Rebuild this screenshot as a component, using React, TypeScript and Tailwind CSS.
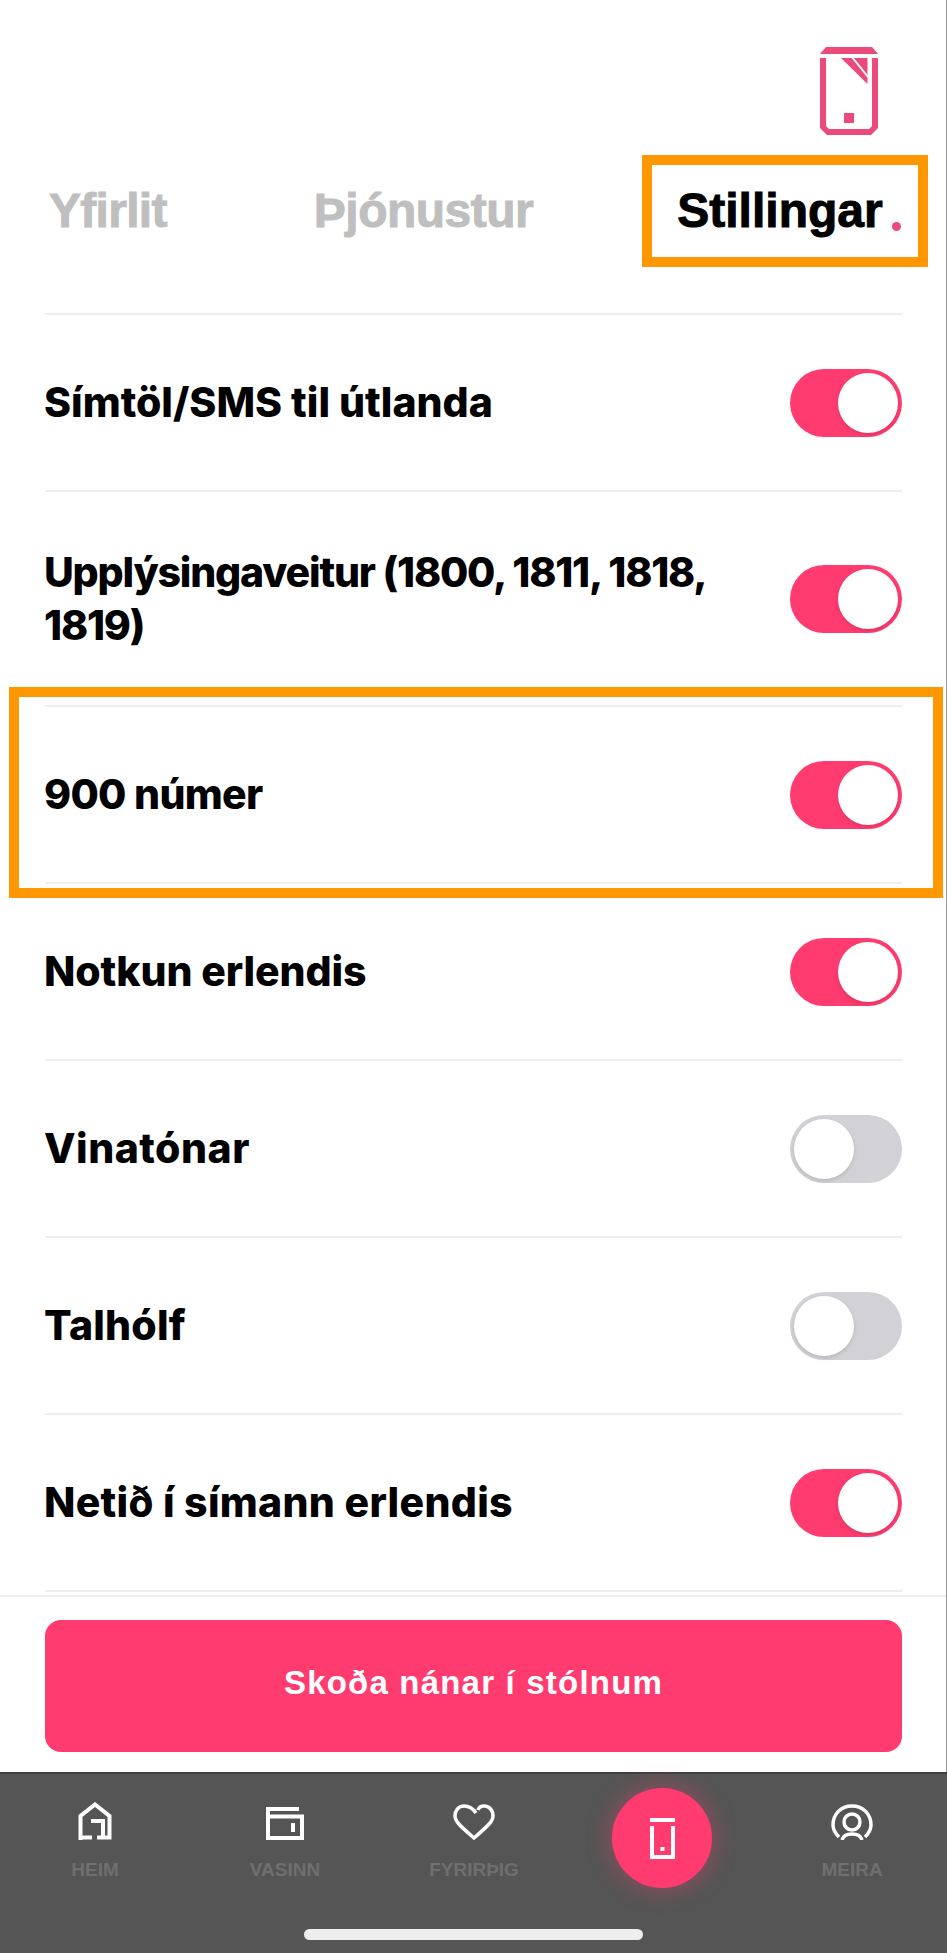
const rows: { label: string; on: boolean; tall?: boolean; track: string }[] = [
  { label: "Símtöl/SMS til útlanda", on: true, track: "tracking-[0px]" },
  { label: "Upplýsingaveitur (1800, 1811, 1818, 1819)", on: true, tall: true, track: "tracking-[-1.2px]" },
  { label: "900 númer", on: true, track: "tracking-[-0.7px]" },
  { label: "Notkun erlendis", on: true, track: "tracking-[-0.1px]" },
  { label: "Vinatónar", on: false, track: "tracking-[0.5px]" },
  { label: "Talhólf", on: false, track: "tracking-[0.2px]" },
  { label: "Netið í símann erlendis", on: true, track: "tracking-[0.3px]" },
];

function Toggle({ on }: { on: boolean }) {
  return (
    <div
      className={`flex h-[68px] w-[112px] shrink-0 items-center rounded-full px-1 ${
        on ? "justify-end bg-[#ff3b6f]" : "justify-start bg-[#d1d1d6]"
      }`}
    >
      <div className="h-[60px] w-[60px] rounded-full bg-white shadow-[0_2px_4px_rgba(0,0,0,0.12)]" />
    </div>
  );
}

function Row({ label, on, tall, track }: { label: string; on: boolean; tall?: boolean; track: string }) {
  return (
    <div
      className={`flex items-center justify-between border-b-2 border-[#eeeeee] ${
        tall ? "h-[215px]" : "h-[177px]"
      }`}
    >
      <div
        className={`-ml-px w-[700px] font-['Inter','Liberation_Sans',sans-serif] text-[41px] font-extrabold leading-[53px] text-black ${track}`}
      >
        {label}
      </div>
      <Toggle on={on} />
    </div>
  );
}

function NavItem({ label, children }: { label: string; children: React.ReactNode }) {
  return (
    <div className="flex w-[150px] flex-col items-center">
      <div className="flex h-[38px] items-end">{children}</div>
      <div className="mt-[20px] font-['Liberation_Sans',sans-serif] text-[19px] font-bold leading-[20px] text-[#6f6f6f]">
        {label}
      </div>
    </div>
  );
}

export default function App() {
  return (
    <div className="relative flex h-[1953px] w-[947px] flex-col overflow-hidden bg-white">
      <div className="flex justify-end pr-[69px] pt-[47px]">
        <svg width="58" height="88" viewBox="0 0 58 88" fill="#ec4a7b">
          <path d="M6 0H52L58 7H0Z" />
          <path d="M0 11H6V79L9 82H49L52 79V11H58V81L51 88H7L0 81Z" />
          <path d="M21 11H47.5V37Z" />
          <path d="M32 10L48 30" fill="none" stroke="#fff" strokeWidth="2" />
          <rect x="24" y="66" width="10" height="10" />
        </svg>
      </div>

      <div className="mt-[52px] flex h-[48px] items-center font-['Liberation_Sans',sans-serif] text-[48px] font-bold leading-[48px] text-[#bfbfbf] [-webkit-text-stroke:1px_currentColor]">
        <span className="ml-[49px] tracking-[-0.7px]">Yfirlit</span>
        <span className="ml-[147px] tracking-[-0.5px]">Þjónustur</span>
        <span className="ml-[144px] text-black">Stillingar</span>
        <span className="ml-[9px] mt-[30px] h-[9px] w-[9px] rounded-full bg-[#ec4a7b]" />
      </div>

      <div className="mx-[45px] mt-[78px] border-t-2 border-[#eeeeee]">
        {rows.map((r, i) => (
          <Row key={i} {...r} />
        ))}
      </div>

      <div className="mt-[3px] h-[2px] bg-[#eeeeee]" />

      <div className="mx-[45px] mt-[23px] flex h-[132px] items-center justify-center rounded-[16px] bg-[#ff3b6f] pb-[6px]">
        <span className="font-['Liberation_Sans',sans-serif] text-[33px] font-bold tracking-[1.2px] text-white">
          Skoða nánar í stólnum
        </span>
      </div>

      <div className="relative mt-[20px] flex-1 border-t-2 border-[#3f3f3f] bg-[#555555]">
        <div className="absolute left-[20px] top-[28px]">
          <NavItem label="HEIM">
            <svg width="34" height="38" viewBox="0 0 34 38" fill="none" stroke="#fff" strokeWidth="4">
              <path d="M2.5 38V14L17 2.5L31.5 14V35.5H19" />
              <path d="M25 35V19H13" />
              <path d="M2.5 35.5H14" />
            </svg>
          </NavItem>
        </div>
        <div className="absolute left-[210px] top-[28px]">
          <NavItem label="VASINN">
            <svg width="38" height="33" viewBox="0 0 38 33" fill="none" stroke="#fff" strokeWidth="4">
              <path d="M33 2H2V31H36V9.5H2" />
              <path d="M27 16V25" />
            </svg>
          </NavItem>
        </div>
        <div className="absolute left-[399px] top-[28px]">
          <NavItem label="FYRIRÞIG">
            <svg width="42" height="36" viewBox="0 0 42 36" fill="none" stroke="#fff" strokeWidth="3.5">
              <path d="M23 9C19 3 15 2 11 2C5 2 2 7 2 12C2 17 6 21 21 34C36 21 40 17 40 12C40 6 36 2 31 2C28 2 26 3 25 6" />
            </svg>
          </NavItem>
        </div>
        <div className="absolute left-[612px] top-[14px] flex h-[100px] w-[100px] items-center justify-center rounded-full bg-[#ff3b6f] shadow-[0_0_24px_rgba(255,59,111,0.45)]">
          <svg width="25" height="41" viewBox="0 0 25 41" fill="none" stroke="#fff" strokeWidth="4">
            <path d="M0 2H25" />
            <path d="M2 8V39H23V8" />
            <rect x="10.5" y="29" width="4" height="4" fill="#fff" stroke="none" />
          </svg>
        </div>
        <div className="absolute left-[777px] top-[28px]">
          <NavItem label="MEIRA">
            <svg width="42" height="36" viewBox="0 0 42 36" fill="none" stroke="#fff" strokeWidth="3.5">
              <path d="M8 33C4 29 2 25 2 21C2 10 10 2 21 2C32 2 40 10 40 21C40 25 38 29 34 33" />
              <circle cx="21" cy="18" r="8" />
              <path d="M11 36C12 32 15 30 21 30C27 30 30 32 31 36" />
            </svg>
          </NavItem>
        </div>
        <div className="absolute left-[304px] top-[155px] h-[11px] w-[339px] rounded-full bg-[#eeeeee]" />
      </div>

      <div className="absolute left-[642px] top-[155px] h-[112px] w-[286px] border-[10px] border-[#ff9800]" />
      <div className="absolute left-[9px] top-[687px] h-[211px] w-[934px] border-[10px] border-[#ff9800]" />
      <div className="absolute right-0 top-0 h-[1772px] w-px bg-[#999999]" />
    </div>
  );
}
